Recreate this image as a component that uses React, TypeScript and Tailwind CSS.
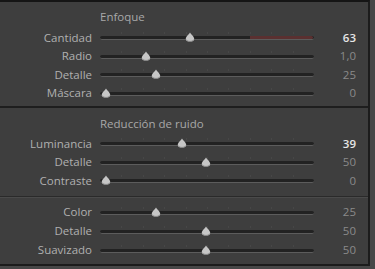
import React from "react";

type Row = { label: string; value: string; pos: number; bright?: boolean; red?: boolean };

const font = { fontFamily: '"Open Sans", "Liberation Sans", sans-serif' };

function Slider({ pos, red }: { pos: number; red?: boolean }) {
  const ticks = [0.1, 0.2, 0.3, 0.4, 0.5, 0.6, 0.7, 0.8, 0.9];
  return (
    <div className="relative w-[214px] h-[10px]">
      {ticks.map((t) => (
        <div
          key={t}
          className="absolute top-[0px] w-px h-[2px] bg-[#474747]"
          style={{ left: `${t * 100}%` }}
        />
      ))}
      <div className="absolute left-0 right-0 top-[4px] h-[4px] rounded-full bg-[#222222] border-b border-[#5c5c5c]" />
      {red && (
        <div className="absolute left-[150px] right-[1px] top-[4px] h-[3px] rounded-r-full bg-[#5a3030]" />
      )}
      <svg
        className="absolute top-[0px]"
        style={{ left: `${6 + pos * 200 - 5}px` }}
        width="10"
        height="10"
        viewBox="0 0 10 10"
      >
        <path d="M5 0.6 C6 2.3 9.2 4.8 9.2 7 C9.2 8.8 7.5 9.6 5 9.6 C2.5 9.6 0.8 8.8 0.8 7 C0.8 4.8 4 2.3 5 0.6 Z" fill="#c6c6c6" />
        <path d="M1.5 7.6 C2 8.9 3.5 9.4 5 9.4 C6.5 9.4 8 8.9 8.5 7.6" stroke="#8a8a8a" strokeWidth="0.8" fill="none" />
      </svg>
    </div>
  );
}

function SliderRow({ r, h }: { r: Row; h: string }) {
  return (
    <div className={`flex items-center ${h}`}>
      <div className="w-[92px] text-right text-[11.5px] text-[#b0b0b0] leading-none">{r.label}</div>
      <div className="ml-[8px]">
        <Slider pos={r.pos} red={r.red} />
      </div>
      <div
        className={`w-[42px] text-right text-[11.5px] leading-none ${
          r.bright ? "text-[#e6e6e6] font-semibold" : "text-[#8a8a8a]"
        }`}
      >
        {r.value}
      </div>
    </div>
  );
}

export default function App() {
  const s1: Row[] = [
    { label: "Cantidad", value: "63", pos: 63 / 150, bright: true, red: true },
    { label: "Radio", value: "1,0", pos: 0.2 },
    { label: "Detalle", value: "25", pos: 0.25 },
    { label: "Máscara", value: "0", pos: 0 },
  ];
  const s2: Row[] = [
    { label: "Luminancia", value: "39", pos: 0.38, bright: true },
    { label: "Detalle", value: "50", pos: 0.5 },
    { label: "Contraste", value: "0", pos: 0 },
  ];
  const s3: Row[] = [
    { label: "Color", value: "25", pos: 0.25 },
    { label: "Detalle", value: "50", pos: 0.5 },
    { label: "Suavizado", value: "50", pos: 0.5 },
  ];
  return (
    <div className="w-[375px] h-[269px] bg-[#474747] overflow-hidden" style={font}>
      <div className="w-[370px] h-[266px] bg-[#3e3e3e] border-t-2 border-t-[#151515] border-r-2 border-r-[#1c1c1c] border-b-2 border-b-[#1c1c1c]">
        <div className="pt-[6px]">
          <div className="pl-[100px] h-[18px] flex items-center text-[11.5px] text-[#a8a8a8]">Enfoque</div>
          <div className="pt-[2px]">
            {s1.map((r) => (
              <SliderRow key={r.label} r={r} h="h-[18.5px]" />
            ))}
          </div>
        </div>
        <div className="mt-[4px] h-[2px] bg-[#1e1e1e]" />
        <div className="pt-[7px]">
          <div className="pl-[100px] h-[18px] flex items-center text-[11.5px] text-[#a8a8a8]">Reducción de ruido</div>
          <div className="pt-[1px]">
            {s2.map((r) => (
              <SliderRow key={r.label + "2"} r={r} h="h-[18.5px]" />
            ))}
          </div>
        </div>
        <div className="mt-[6px] h-px bg-[#2a2a2a]" />
        <div className="h-px bg-[#4a4a4a]" />
        <div className="pt-[5px]">
          {s3.map((r) => (
            <SliderRow key={r.label + "3"} r={r} h="h-[19px]" />
          ))}
        </div>
      </div>
    </div>
  );
}
